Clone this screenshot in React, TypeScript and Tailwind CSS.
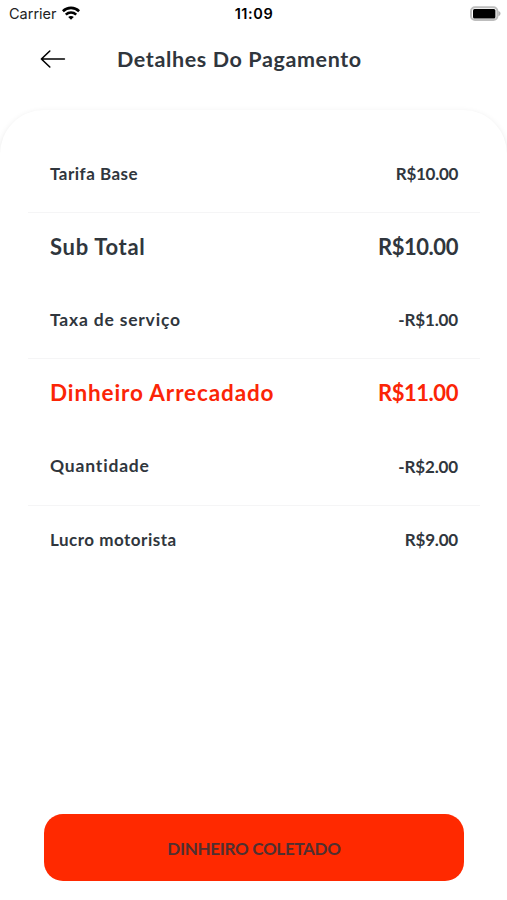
import React from 'react';

type PaymentRow = {
  label: string;
  amount: string;
  rowClass: string;
  labelClass: string;
  amountClass: string;
};

// Rows come in pairs, each pair is separated by a thin line
const regular = 'h-[77.5px] pt-px text-[17px] text-[#30363d]';
const divided = 'h-[69px] border-t border-[#f5f5f6]';

const rows: PaymentRow[] = [
  { label: 'Tarifa Base', amount: 'R$10.00', rowClass: regular, labelClass: 'tracking-[0.5px]', amountClass: 'tracking-[-0.3px]' },
  { label: 'Sub Total', amount: 'R$10.00', rowClass: `${divided} pb-px text-[22px] text-[#30363d]`, labelClass: 'tracking-[0.7px]', amountClass: 'tracking-[-0.45px]' },
  { label: 'Taxa de serviço', amount: '-R$1.00', rowClass: regular, labelClass: 'text-[17.5px] tracking-[0.8px]', amountClass: 'tracking-[-0.15px]' },
  { label: 'Dinheiro Arrecadado', amount: 'R$11.00', rowClass: `${divided} pb-px text-[22px] text-[#fb2506]`, labelClass: 'text-[22.5px] tracking-[0.88px]', amountClass: 'tracking-[-0.45px]' },
  { label: 'Quantidade', amount: '-R$2.00', rowClass: regular, labelClass: 'text-[17.5px] tracking-[0.82px]', amountClass: 'tracking-[-0.15px]' },
  { label: 'Lucro motorista', amount: 'R$9.00', rowClass: `${divided} text-[17px] text-[#30363d]`, labelClass: 'tracking-[0.5px]', amountClass: 'tracking-[-0.2px]' },
];

const StatusBar: React.FC = () => (
  <div className="grid h-7 grid-cols-3 items-center pr-1.5 pl-[9px] font-['Inter',sans-serif] text-black">
    <div className="flex items-center gap-[5px]">
      <span className="text-[14.5px] leading-none text-[#222]">Carrier</span>
      <svg className="-mt-0.5" width="18" height="14" viewBox="0 0 18 14" fill="none" stroke="currentColor" strokeWidth="2.6">
        <path d="M.9 5.2C5.4.8 12.6.8 17.1 5.2" />
        <path d="M3.8 8.6c3-2.8 7.4-2.8 10.4 0" />
        <path d="M9 13.8 6.2 11c1.6-1.5 4-1.5 5.6 0Z" fill="currentColor" stroke="none" />
      </svg>
    </div>
    <span className="-ml-0.5 text-center text-[14.5px] leading-none font-semibold tracking-[0.6px]">11:09</span>
    <svg className="-mt-px ml-auto" width="31" height="16" viewBox="0 0 31 16">
      <rect x="1" y="1.2" width="26.4" height="12.8" rx="4" fill="#fff" stroke="#bdbdbd" strokeWidth="2" />
      <rect x="3" y="3" width="22.4" height="9.4" rx="1.5" fill="#000" />
      <path d="M28.4 5c2.8 1 2.8 4.2 0 5.2Z" fill="#b0b0b0" />
    </svg>
  </div>
);

const Header: React.FC = () => (
  <header className="flex h-[82px] items-start pt-[17px] pl-10">
    <button className="flex h-7 w-[77px] items-center" aria-label="Voltar">
      <svg width="26" height="20" viewBox="0 0 26 20" fill="none" stroke="#000" strokeWidth="1.6" strokeLinecap="round" strokeLinejoin="round">
        <path d="M9.8 2 1.4 10l8.4 8M1.4 10H24.4" />
      </svg>
    </button>
    <h1 className="text-[21.5px] leading-7 font-bold tracking-[0.62px] whitespace-nowrap text-[#30363d]">
      Detalhes Do Pagamento
    </h1>
  </header>
);

const App: React.FC = () => {
  return (
    <div className="flex h-[900px] w-full flex-col overflow-hidden bg-white font-['Lato','Open_Sans',sans-serif]">
      <StatusBar />
      <Header />
      <main className="flex flex-1 flex-col rounded-t-[44px] bg-white pt-6 shadow-[0_2px_6px_rgba(0,0,0,0.1)]">
        <div className="mr-[27px] ml-[28px]">
          {rows.map((row) => (
            <div key={row.label} className={`flex items-center justify-between pr-[22px] pl-[22px] font-bold whitespace-nowrap ${row.rowClass}`}>
              <span className={row.labelClass}>{row.label}</span>
              <span className={row.amountClass}>{row.amount}</span>
            </div>
          ))}
        </div>
        <button className="mr-[43px] ml-[44px] mt-auto mb-[19px] h-[67px] rounded-[19px] bg-[#ff2900] pt-0.5 text-[17px] font-bold tracking-[-0.3px] text-[#4f3030]">
          DINHEIRO COLETADO
        </button>
      </main>
    </div>
  );
};

export default App;
